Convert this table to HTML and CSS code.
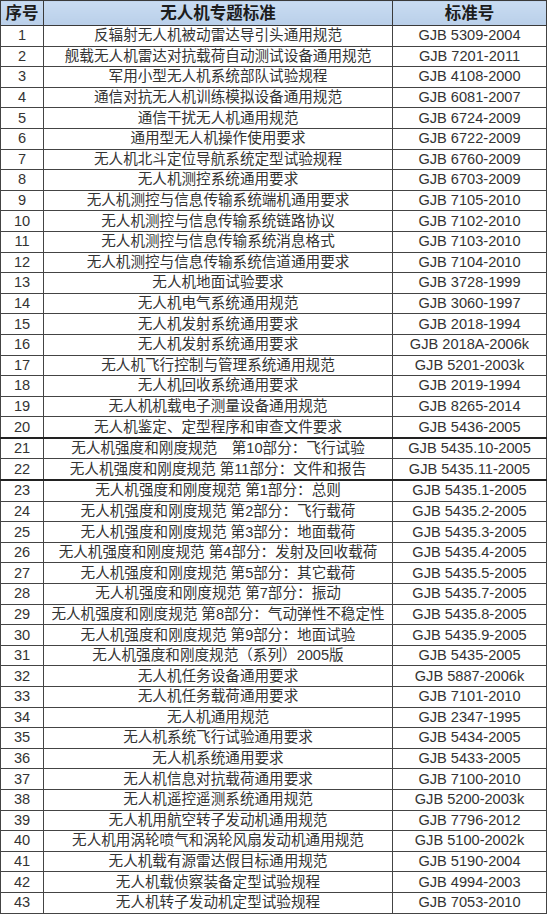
FILE: index.html
```html
<!DOCTYPE html>
<html lang="zh">
<head>
<meta charset="utf-8">
<title>无人机专题标准</title>
<link rel="stylesheet" href="styles.css">
</head>
<body>
<table class="std">
<colgroup><col class="c-no"><col class="c-name"><col class="c-code"></colgroup>
<thead>
<tr><th>序号</th><th>无人机专题标准</th><th>标准号</th></tr>
</thead>
<tbody>
<tr><td>1</td><td>反辐射无人机被动雷达导引头通用规范</td><td>GJB 5309-2004</td></tr>
<tr><td>2</td><td>舰载无人机雷达对抗载荷自动测试设备通用规范</td><td>GJB 7201-2011</td></tr>
<tr><td>3</td><td>军用小型无人机系统部队试验规程</td><td>GJB 4108-2000</td></tr>
<tr><td>4</td><td>通信对抗无人机训练模拟设备通用规范</td><td>GJB 6081-2007</td></tr>
<tr><td>5</td><td>通信干扰无人机通用规范</td><td>GJB 6724-2009</td></tr>
<tr><td>6</td><td>通用型无人机操作使用要求</td><td>GJB 6722-2009</td></tr>
<tr><td>7</td><td>无人机北斗定位导航系统定型试验规程</td><td>GJB 6760-2009</td></tr>
<tr><td>8</td><td>无人机测控系统通用要求</td><td>GJB 6703-2009</td></tr>
<tr><td>9</td><td>无人机测控与信息传输系统端机通用要求</td><td>GJB 7105-2010</td></tr>
<tr><td>10</td><td>无人机测控与信息传输系统链路协议</td><td>GJB 7102-2010</td></tr>
<tr><td>11</td><td>无人机测控与信息传输系统消息格式</td><td>GJB 7103-2010</td></tr>
<tr><td>12</td><td>无人机测控与信息传输系统信道通用要求</td><td>GJB 7104-2010</td></tr>
<tr><td>13</td><td>无人机地面试验要求</td><td>GJB 3728-1999</td></tr>
<tr><td>14</td><td>无人机电气系统通用规范</td><td>GJB 3060-1997</td></tr>
<tr><td>15</td><td>无人机发射系统通用要求</td><td>GJB 2018-1994</td></tr>
<tr><td>16</td><td>无人机发射系统通用要求</td><td>GJB 2018A-2006k</td></tr>
<tr><td>17</td><td>无人机飞行控制与管理系统通用规范</td><td>GJB 5201-2003k</td></tr>
<tr><td>18</td><td>无人机回收系统通用要求</td><td>GJB 2019-1994</td></tr>
<tr><td>19</td><td>无人机机载电子测量设备通用规范</td><td>GJB 8265-2014</td></tr>
<tr class="thick"><td>20</td><td>无人机鉴定、定型程序和审查文件要求</td><td>GJB 5436-2005</td></tr>
<tr><td>21</td><td>无人机强度和刚度规范　第10部分：飞行试验</td><td>GJB 5435.10-2005</td></tr>
<tr class="thick"><td>22</td><td>无人机强度和刚度规范 第11部分：文件和报告</td><td>GJB 5435.11-2005</td></tr>
<tr><td>23</td><td>无人机强度和刚度规范 第1部分：总则</td><td>GJB 5435.1-2005</td></tr>
<tr><td>24</td><td>无人机强度和刚度规范 第2部分：飞行载荷</td><td>GJB 5435.2-2005</td></tr>
<tr><td>25</td><td>无人机强度和刚度规范 第3部分：地面载荷</td><td>GJB 5435.3-2005</td></tr>
<tr><td>26</td><td>无人机强度和刚度规范 第4部分：发射及回收载荷</td><td>GJB 5435.4-2005</td></tr>
<tr><td>27</td><td>无人机强度和刚度规范 第5部分：其它载荷</td><td>GJB 5435.5-2005</td></tr>
<tr><td>28</td><td>无人机强度和刚度规范 第7部分：振动</td><td>GJB 5435.7-2005</td></tr>
<tr><td>29</td><td>无人机强度和刚度规范 第8部分：气动弹性不稳定性</td><td>GJB 5435.8-2005</td></tr>
<tr><td>30</td><td>无人机强度和刚度规范 第9部分：地面试验</td><td>GJB 5435.9-2005</td></tr>
<tr><td>31</td><td>无人机强度和刚度规范（系列）2005版</td><td>GJB 5435-2005</td></tr>
<tr><td>32</td><td>无人机任务设备通用要求</td><td>GJB 5887-2006k</td></tr>
<tr><td>33</td><td>无人机任务载荷通用要求</td><td>GJB 7101-2010</td></tr>
<tr><td>34</td><td>无人机通用规范</td><td>GJB 2347-1995</td></tr>
<tr><td>35</td><td>无人机系统飞行试验通用要求</td><td>GJB 5434-2005</td></tr>
<tr><td>36</td><td>无人机系统通用要求</td><td>GJB 5433-2005</td></tr>
<tr><td>37</td><td>无人机信息对抗载荷通用要求</td><td>GJB 7100-2010</td></tr>
<tr><td>38</td><td>无人机遥控遥测系统通用规范</td><td>GJB 5200-2003k</td></tr>
<tr><td>39</td><td>无人机用航空转子发动机通用规范</td><td>GJB 7796-2012</td></tr>
<tr><td>40</td><td>无人机用涡轮喷气和涡轮风扇发动机通用规范</td><td>GJB 5100-2002k</td></tr>
<tr><td>41</td><td>无人机载有源雷达假目标通用规范</td><td>GJB 5190-2004</td></tr>
<tr><td>42</td><td>无人机载侦察装备定型试验规程</td><td>GJB 4994-2003</td></tr>
<tr><td>43</td><td>无人机转子发动机定型试验规程</td><td>GJB 7053-2010</td></tr>
</tbody>
</table>
</body>
</html>
```
FILE: styles.css
```css
html, body {
  margin: 0;
  padding: 0;
  background: #ffffff;
}
.std {
  border-collapse: collapse;
  table-layout: fixed;
  width: 546px;
  font-family: "Liberation Sans", "Noto Sans CJK SC", sans-serif;
  color: #333333;
}
.c-no { width: 43px; }
.c-name { width: 349px; }
.c-code { width: 154px; }
.std th {
  height: 24px;
  padding: 0;
  background: linear-gradient(#c9dcf2, #b9cfe9);
  color: #1c1c1c;
  font-size: 16.5px;
  font-weight: bold;
  text-align: center;
  border: 1px solid #3a3a3a;
  line-height: 24px;
}
.std td {
  height: 19.6px;
  padding: 0;
  font-size: 14.6px;
  line-height: 19px;
  text-align: center;
  white-space: nowrap;
  border: 1px solid #444;
}
.std tr.thick td {
  border-bottom: 2px solid #222;
}
```
